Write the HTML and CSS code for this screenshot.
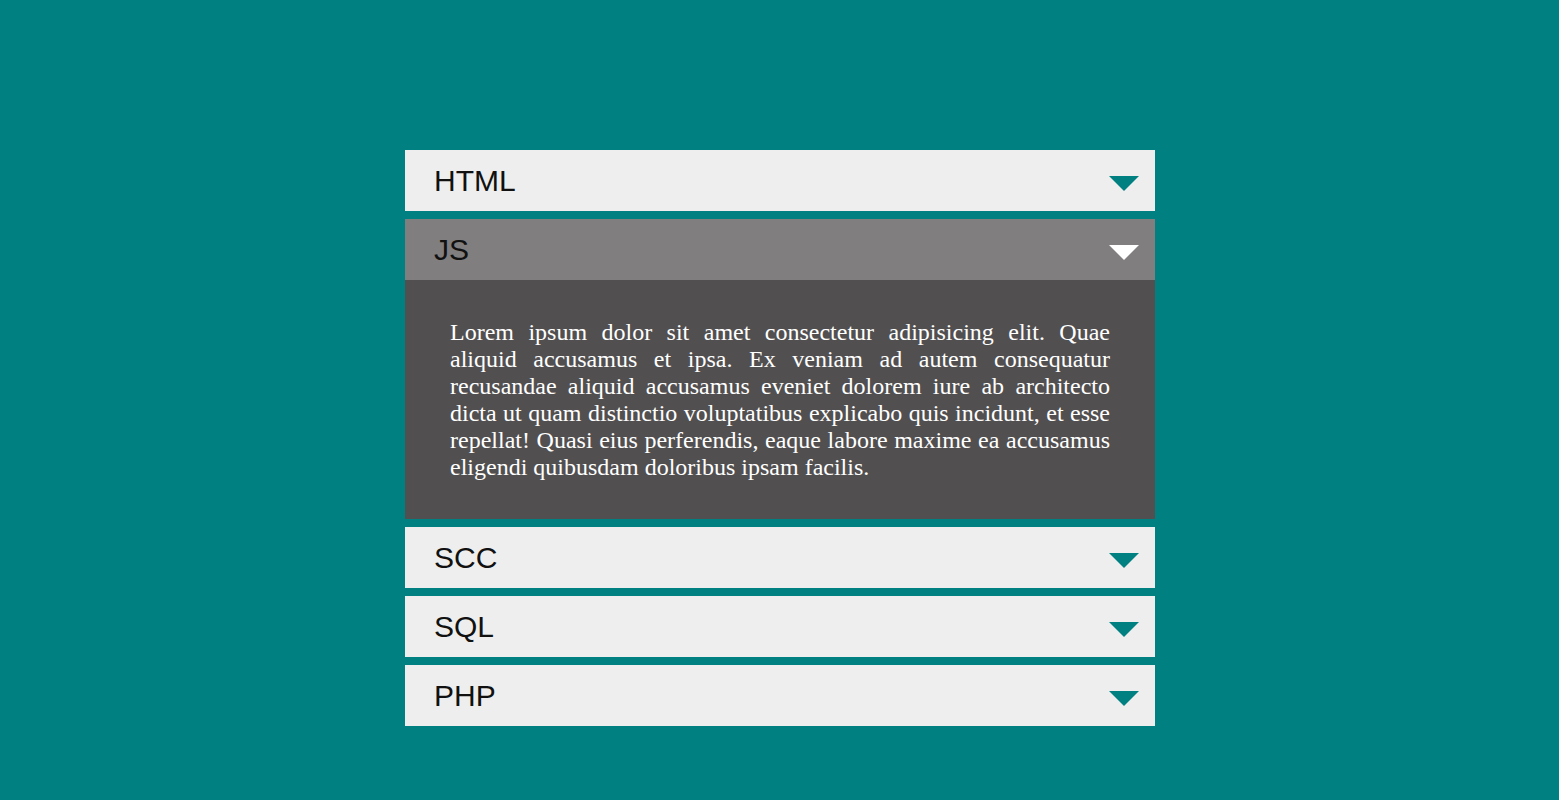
FILE: index.html
```html
<!DOCTYPE html>
<html>
<head>
<meta charset="utf-8">
<link rel="stylesheet" href="styles.css">
</head>
<body>
<div class="accordion">
  <div class="item">
    <div class="header"><span class="title">HTML</span><span class="arrow"></span></div>
  </div>
  <div class="item active">
    <div class="header"><span class="title">JS</span><span class="arrow"></span></div>
    <div class="content">
      <p>Lorem ipsum dolor sit amet consectetur adipisicing elit. Quae aliquid accusamus et ipsa. Ex veniam ad autem consequatur recusandae aliquid accusamus eveniet dolorem iure ab architecto dicta ut quam distinctio voluptatibus explicabo quis incidunt, et esse repellat! Quasi eius perferendis, eaque labore maxime ea accusamus eligendi quibusdam doloribus ipsam facilis.</p>
    </div>
  </div>
  <div class="item">
    <div class="header"><span class="title">SCC</span><span class="arrow"></span></div>
  </div>
  <div class="item">
    <div class="header"><span class="title">SQL</span><span class="arrow"></span></div>
  </div>
  <div class="item">
    <div class="header"><span class="title">PHP</span><span class="arrow"></span></div>
  </div>
</div>
</body>
</html>
```
FILE: styles.css
```css
html, body {
  margin: 0;
  padding: 0;
}
body {
  background: #008080;
  height: 800px;
  font-family: "Liberation Serif", serif;
}
.accordion {
  width: 750px;
  margin-left: 405px;
  padding-top: 150px;
  display: flex;
  flex-direction: column;
  gap: 8px;
}
.header {
  height: 61px;
  background: #eeeeee;
  display: flex;
  align-items: center;
  justify-content: space-between;
  padding: 0 16px 0 29px;
  box-sizing: border-box;
}
.title {
  font-family: "Liberation Sans", Arial, sans-serif;
  font-size: 30px;
  color: #111111;
  padding-top: 1px;
}
.arrow {
  width: 0;
  height: 0;
  border-left: 15px solid transparent;
  border-right: 15px solid transparent;
  border-top: 15px solid #008080;
  margin-top: 6px;
}
.active .header {
  background: #807e7e;
}
.active .arrow {
  border-top-color: #ffffff;
}
.content {
  background: #524f50;
  padding: 39px 45px 38px;
}
.content p {
  margin: 0;
  color: #ffffff;
  font-size: 24px;
  line-height: 27px;
  text-align: justify;
}
```
